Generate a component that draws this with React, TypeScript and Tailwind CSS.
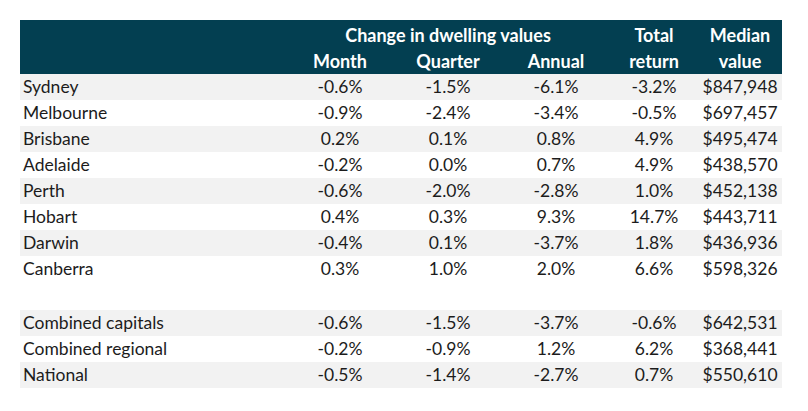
const rows: [string, string, string, string, string, string][] = [
  ['Sydney', '-0.6%', '-1.5%', '-6.1%', '-3.2%', '$847,948'],
  ['Melbourne', '-0.9%', '-2.4%', '-3.4%', '-0.5%', '$697,457'],
  ['Brisbane', '0.2%', '0.1%', '0.8%', '4.9%', '$495,474'],
  ['Adelaide', '-0.2%', '0.0%', '0.7%', '4.9%', '$438,570'],
  ['Perth', '-0.6%', '-2.0%', '-2.8%', '1.0%', '$452,138'],
  ['Hobart', '0.4%', '0.3%', '9.3%', '14.7%', '$443,711'],
  ['Darwin', '-0.4%', '0.1%', '-3.7%', '1.8%', '$436,936'],
  ['Canberra', '0.3%', '1.0%', '2.0%', '6.6%', '$598,326'],
];

const totals: [string, string, string, string, string, string][] = [
  ['Combined capitals', '-0.6%', '-1.5%', '-3.7%', '-0.6%', '$642,531'],
  ['Combined regional', '-0.2%', '-0.9%', '1.2%', '6.2%', '$368,441'],
  ['National', '-0.5%', '-1.4%', '-2.7%', '0.7%', '$550,610'],
];

function Row({ cells, shaded }: { cells: string[]; shaded: boolean }) {
  return (
    <tr className={shaded ? 'h-[26px] bg-[#f2f2f2]' : 'h-[26px] bg-white'}>
      <td className="pl-[3px] text-left">{cells[0]}</td>
      {cells.slice(1).map((c, i) => (
        <td key={i} className="text-center">
          {c}
        </td>
      ))}
    </tr>
  );
}

export default function App() {
  return (
    <div className="w-[808px] h-[411px] bg-white pt-[20px] pl-[20px] font-['Lato',sans-serif] text-[17.5px] text-[#1c1c1c]">
      <table className="w-[762px] table-fixed border-collapse leading-[26px]">
        <colgroup>
          <col className="w-[266px]" />
          <col className="w-[108px]" />
          <col className="w-[108px]" />
          <col className="w-[108px]" />
          <col className="w-[88px]" />
          <col className="w-[84px]" />
        </colgroup>
        <thead className="bg-[#033f51] text-white text-[18px]">
          <tr className="h-[26px]">
            <th />
            <th colSpan={3} className="text-center font-bold pt-[2px]">
              Change in dwelling values
            </th>
            <th className="text-center font-bold pt-[2px]">Total</th>
            <th className="text-center font-bold pt-[2px]">Median</th>
          </tr>
          <tr className="h-[26px]">
            <th />
            <th className="text-center font-bold">Month</th>
            <th className="text-center font-bold">Quarter</th>
            <th className="text-center font-bold">Annual</th>
            <th className="text-center font-bold">return</th>
            <th className="text-center font-bold">value</th>
          </tr>
        </thead>
        <tbody>
          {rows.map((r, i) => (
            <Row key={r[0]} cells={r} shaded={i % 2 === 0} />
          ))}
          <tr className="h-[28px]">
            <td colSpan={6} />
          </tr>
          {totals.map((r, i) => (
            <Row key={r[0]} cells={r} shaded={i % 2 === 0} />
          ))}
        </tbody>
      </table>
    </div>
  );
}
